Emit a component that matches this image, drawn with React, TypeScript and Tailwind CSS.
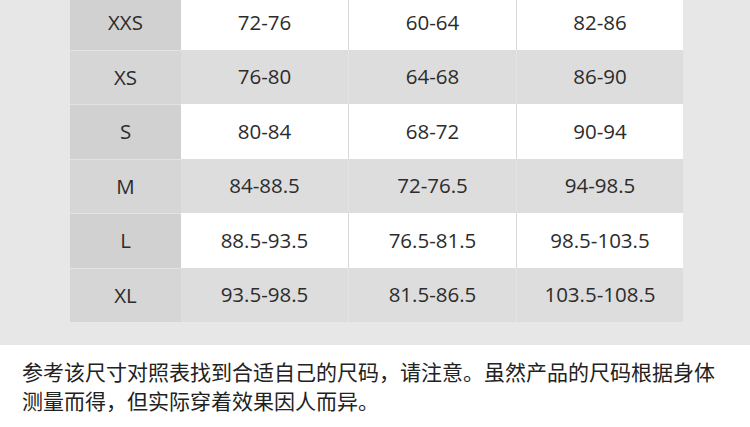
import React from "react";

const rows = [
  ["XXS", "72-76", "60-64", "82-86"],
  ["XS", "76-80", "64-68", "86-90"],
  ["S", "80-84", "68-72", "90-94"],
  ["M", "84-88.5", "72-76.5", "94-98.5"],
  ["L", "88.5-93.5", "76.5-81.5", "98.5-103.5"],
  ["XL", "93.5-98.5", "81.5-86.5", "103.5-108.5"],
];

export default function App() {
  return (
    <div className="w-[750px] h-[427px] overflow-hidden bg-white">
      <div className="h-[345px] bg-[#e7e7e7] overflow-hidden">
        <div
          className="ml-[70px] mt-[-5px] w-[613px] grid grid-cols-[111px_168px_168px_166px] text-[20.5px] text-[#2c2c2c]"
          style={{ fontFamily: '"Open Sans", "Noto Sans", sans-serif' }}
        >
          {rows.map((r, i) => {
            const white = i % 2 === 0;
            return (
              <React.Fragment key={i}>
                <div
                  className={`h-[54.5px] flex items-center justify-center ${
                    white ? "bg-[#d1d1d1]" : "bg-[#d6d6d6]"
                  } ${i > 0 ? "border-t border-[#e2e2e2]" : ""}`}
                >
                  {r[0]}
                </div>
                {r.slice(1).map((v, j) => (
                  <div
                    key={j}
                    className={`h-[54.5px] flex items-center justify-center ${
                      white ? "bg-white" : "bg-[#dddddd]"
                    } ${
                      j < 2
                        ? white
                          ? "border-r border-[#d8d8d8]"
                          : "border-r border-[#e4e4e4]"
                        : ""
                    }`}
                  >
                    {v}
                  </div>
                ))}
              </React.Fragment>
            );
          })}
        </div>
      </div>
      <div
        className="pl-[22px] pr-[20px] pt-[12px] text-[21px] leading-[29px] text-[#222]"
        style={{ fontFamily: '"Noto Sans CJK SC", "Noto Sans", sans-serif' }}
      >
        <p>参考该尺寸对照表找到合适自己的尺码，请注意。虽然产品的尺码根据身体</p>
        <p>测量而得，但实际穿着效果因人而异。</p>
      </div>
    </div>
  );
}
